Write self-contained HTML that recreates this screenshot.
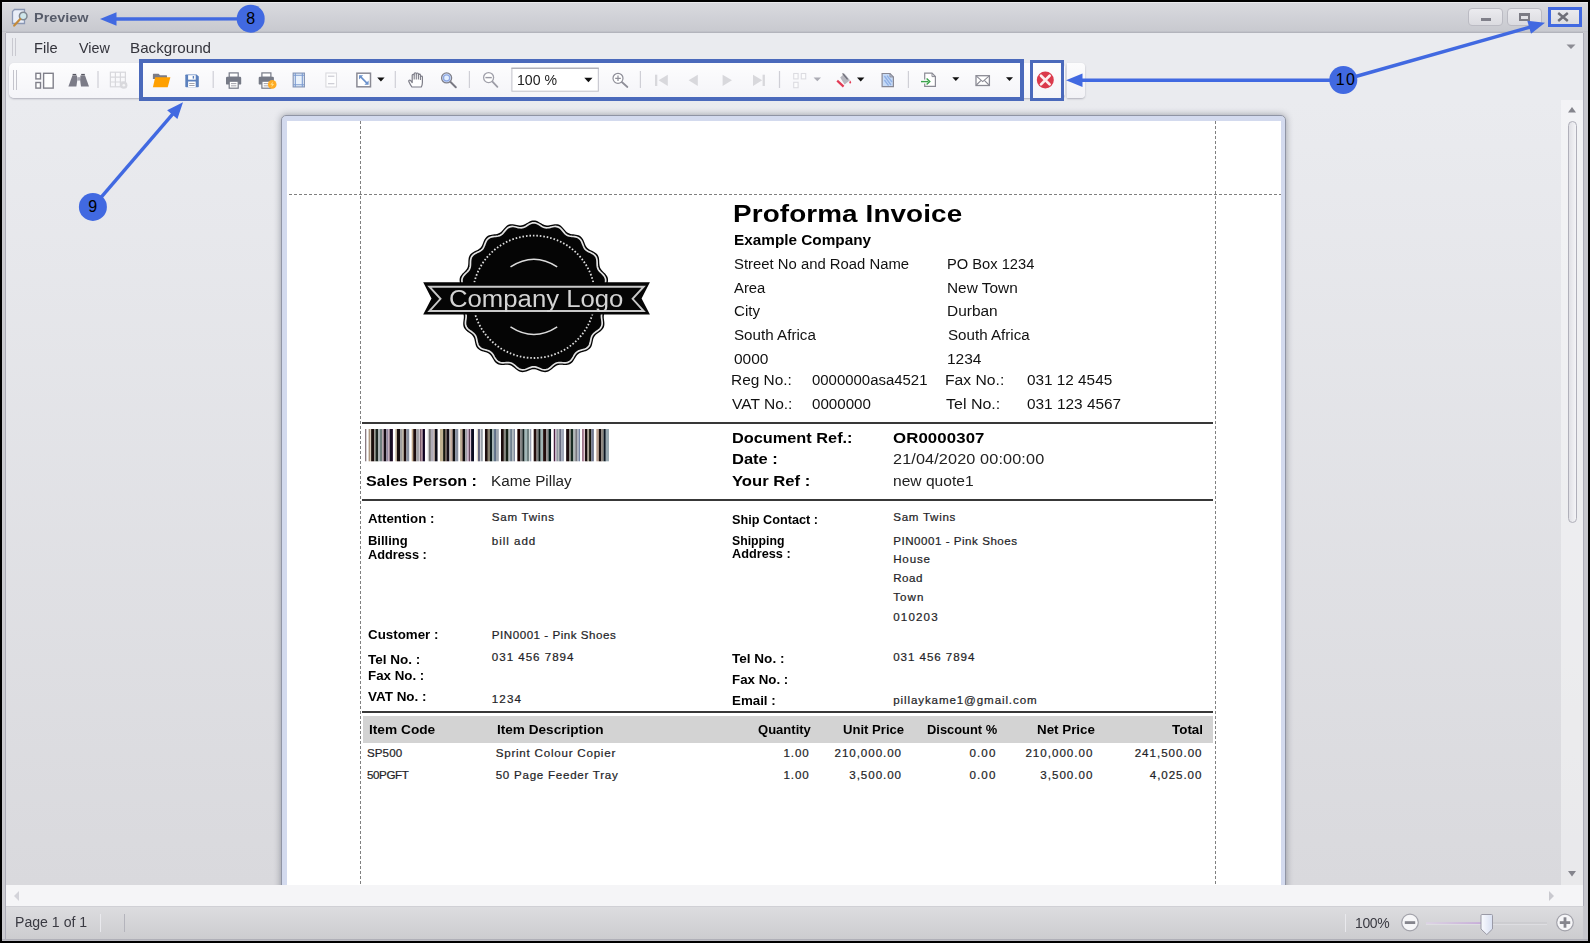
<!DOCTYPE html>
<html><head><meta charset="utf-8"><title>Preview</title>
<style>
*{box-sizing:border-box;margin:0;padding:0}
html,body{width:1590px;height:943px;overflow:hidden;background:#000;font-family:"Liberation Sans",sans-serif}
.a{position:absolute}
.t{position:absolute;white-space:pre;transform-origin:0 0;font-family:"Liberation Sans",sans-serif}
.sr{-webkit-text-stroke:.22px #1f1f28}
svg{position:absolute;overflow:visible}
.sep{position:absolute;width:1px;height:18px;top:71px;background:#c6c6ce}
.wb{position:absolute;top:8px;height:18px;border:1px solid #bbbbc3;border-radius:4px;background:linear-gradient(#ebebef,#dbdbe0)}
.hd{position:absolute;height:1px;background:repeating-linear-gradient(90deg,#808080 0 3px,transparent 3px 5px)}
.vd{position:absolute;width:1px;background:repeating-linear-gradient(180deg,#808080 0 3px,transparent 3px 5px)}
.hl{position:absolute;height:2px;background:#383838}
</style></head><body>
<div class="a" id="abs" style="left:0;top:0;width:1590px;height:943px;overflow:hidden">
<!-- window frame -->
<div class="a" style="left:2px;top:2px;width:1586px;height:939px;background:#c8c8cd"></div>
<!-- title bar -->
<div class="a" style="left:2px;top:2px;width:1586px;height:30px;background:linear-gradient(#d9dadf,#c8c9cf)"></div>
<div class="a" style="left:2px;top:2px;width:1586px;height:1px;background:#e9e9ec"></div>
<div class="a" style="left:2px;top:31px;width:1586px;height:1px;background:#c0c1c8"></div><div class="a" style="left:5px;top:32px;width:1580px;height:1.5px;background:#b3b4bc"></div>
<!-- client -->
<div class="a" style="left:6px;top:33px;width:1577px;height:873px;background:#eaebef"></div>
<!-- menu grip -->
<div class="a" style="left:12px;top:38px;width:1px;height:18px;background:#c9c9d0"></div>
<div class="a" style="left:15px;top:38px;width:1px;height:18px;background:#c9c9d0"></div>
<!-- toolbar -->
<div class="a" style="left:9px;top:63px;width:1056px;height:35px;background:linear-gradient(#fdfdfe,#f4f4f8);border-radius:5px;box-shadow:0 1px 2px #b0b0ba"></div>
<div class="a" style="left:1067px;top:63px;width:18px;height:35px;background:linear-gradient(#fcfcfd,#f2f2f6);border-radius:0 4px 4px 0;box-shadow:0 1px 2px #b0b0ba"></div>
<div class="a" style="left:13px;top:70px;width:1px;height:20px;background:#c4c4cc"></div>
<div class="a" style="left:16px;top:70px;width:1px;height:20px;background:#c4c4cc"></div>
<!-- preview area -->
<div class="a" style="left:6px;top:101px;width:1577px;height:784px;background:linear-gradient(#eaebef,#d9d9dd)"></div>
<!-- page -->
<div class="a" style="left:281px;top:115px;width:1005px;height:790px;background:#fff;border:1px solid #8f94a4;border-radius:5px 5px 0 0;box-shadow:0 0 0 5px #d3daee inset, 0 0 7px rgba(50,55,70,.45)"></div>
<div class="a" style="left:288px;top:121px;width:993px;height:790px;background:#fff"></div>
<!-- dashed margins -->
<div class="hd" style="left:289px;top:194px;width:992px"></div>
<div class="vd" style="left:360px;top:121px;height:764px"></div>
<div class="vd" style="left:1215px;top:121px;height:764px"></div>
<!-- solid rules -->
<div class="hl" style="left:362px;top:422px;width:851px"></div>
<div class="hl" style="left:362px;top:499px;width:851px"></div>
<div class="hl" style="left:362px;top:711px;width:851px"></div>
<!-- table header bg -->
<div class="a" style="left:363px;top:716px;width:850px;height:27px;background:#d3d3d3"></div>
<!-- vscroll -->
<div class="a" style="left:1561px;top:100px;width:22px;height:785px;background:rgba(255,255,255,.42)"></div>
<div class="a" style="left:1567.5px;top:121px;width:9px;height:402px;border:1px solid #b0b0ba;border-radius:4.5px;background:linear-gradient(90deg,#e0e0e5,#f4f4f7)"></div>
<svg style="left:1566px;top:105px" width="12" height="9"><path d="M2 7.4 L6 2 L10 7.4 Z" fill="#85858d"/></svg>
<svg style="left:1566px;top:869px" width="12" height="9"><path d="M2 2 L6 7.4 L10 2 Z" fill="#85858d"/></svg>
<!-- hscroll -->
<div class="a" style="left:6px;top:885px;width:1578px;height:21px;background:#f5f5f7"></div>
<svg style="left:13px;top:890px" width="8" height="12"><path d="M6 1 L1 6 L6 11 Z" fill="#d3d3d9"/></svg>
<svg style="left:1548px;top:890px" width="8" height="12"><path d="M1 1 L6 6 L1 11 Z" fill="#c9c9cf"/></svg>
<!-- status bar -->
<div class="a" style="left:5px;top:906px;width:1580px;height:33px;background:linear-gradient(#dddde0,#cccccf)"></div>
<div class="a" style="left:5px;top:906px;width:1580px;height:1px;background:#d0d0d5"></div>
<div class="a" style="left:100px;top:914px;width:1px;height:18px;background:#e9e9ed"></div>
<div class="a" style="left:124px;top:914px;width:1px;height:18px;background:#b4b4bc"></div>
<div class="a" style="left:1345px;top:914px;width:1px;height:18px;background:#e9e9ed"></div>
<!-- window edges -->
<div class="a" style="left:2px;top:32px;width:4px;height:909px;background:#cbcbd0"></div><div class="a" style="left:5px;top:33px;width:1px;height:906px;background:#adadb9"></div>
<div class="a" style="left:1583px;top:32px;width:5px;height:909px;background:#c6c6cc"></div><div class="a" style="left:1583px;top:33px;width:1px;height:873px;background:#adadb9"></div>
<div class="a" style="left:2px;top:938.5px;width:1586px;height:2.5px;background:linear-gradient(#a9a9b1,#c2c2c8)"></div>
<div class="wb" style="left:1468px;width:35px"></div>
<div class="wb" style="left:1507px;width:35px"></div>
<div class="wb" style="left:1549px;width:32px;border-color:transparent"></div>
<div class="a" style="left:1480.5px;top:18.4px;width:10.5px;height:2.4px;background:#80808a"></div>
<div class="a" style="left:1519px;top:13px;width:11px;height:8px;border:2px solid #7b7b84;border-top-width:3px"></div>
<svg style="left:1557px;top:12px" width="12" height="10"><path d="M1.2 1 L10.8 9 M10.8 1 L1.2 9" stroke="#6f6f78" stroke-width="2.4" fill="none"/></svg>
<svg style="left:1566px;top:44px" width="10" height="6"><path d="M0.5 0.5 H9.5 L5 5 Z" fill="#8c8c94"/></svg>
<svg style="left:10px;top:7px" width="20" height="22" viewBox="0 0 20 22">
<path d="M4.5 2.5 H14.5 V16.5 H2.5 V4.5 Z" fill="#e9eef8" stroke="#8a97b4" stroke-width="1.3"/>
<circle cx="13.2" cy="9" r="3.8" fill="#cfe6ea" stroke="#7f8791" stroke-width="1.5"/>
<path d="M10.3 12 L4.2 18.6" stroke="#c48a3a" stroke-width="2.2" stroke-linecap="round"/>
</svg>
<div class="a" style="left:139px;top:59px;width:885px;height:42px;border:4px solid #4a69bb"></div>
<div class="a" style="left:1030px;top:60px;width:34px;height:41px;border:3px solid #4a69bb"></div>
<div class="a" style="left:1548px;top:7px;width:34px;height:20px;border:3px solid #4169e1"></div>
<svg style="left:0;top:0" width="1590" height="943" viewBox="0 0 1590 943">
<path d="M250.7 18.9 L114.5 19.0" stroke="#4169e1" stroke-width="3.4" fill="none"/><path d="M100.0 19.0 L116.5 12.2 L116.5 25.7 Z" fill="#4169e1"/>
<path d="M92.9 206.9 L173.5 113.2" stroke="#4169e1" stroke-width="3.4" fill="none"/><path d="M183.0 102.2 L177.4 119.1 L167.1 110.3 Z" fill="#4169e1"/>
<path d="M1343.3 80.3 L1080.5 80.3" stroke="#4169e1" stroke-width="3.4" fill="none"/><path d="M1066.0 80.3 L1082.5 73.5 L1082.5 87.0 Z" fill="#4169e1"/>
<path d="M1343.3 80.0 L1531.1 26.8" stroke="#4169e1" stroke-width="3.4" fill="none"/><path d="M1545.0 22.8 L1531.0 33.8 L1527.3 20.8 Z" fill="#4169e1"/>
<circle cx="250.7" cy="18.7" r="14" fill="#4169e1"/>
<circle cx="92.9" cy="206.9" r="14" fill="#4169e1"/>
<circle cx="1343.3" cy="80" r="14" fill="#4169e1"/>
</svg>
<svg style="left:0;top:0" width="1590" height="943" viewBox="0 0 1590 943">
<defs><linearGradient id="trk" x1="0" x2="1"><stop offset="0" stop-color="#ddd2e6"/><stop offset="1" stop-color="#c3a3d8"/></linearGradient>
<linearGradient id="thm" x1="0" x2="1"><stop offset="0" stop-color="#fafbfe"/><stop offset="1" stop-color="#d9e0f2"/></linearGradient></defs>
<rect x="1426" y="922.3" width="56" height="1.6" fill="url(#trk)"/>
<rect x="1492" y="922.3" width="55" height="1.4" fill="#c6c6cc" opacity=".8"/>
<rect x="1426" y="923.9" width="121" height="1" fill="#e2e2e6" opacity=".8"/>
<circle cx="1410" cy="922.5" r="8.3" fill="#f6f6f8" stroke="#a3a3ab" stroke-width="1.2"/>
<rect x="1404.8" y="921.2" width="10.4" height="2.8" fill="#85858d"/>
<circle cx="1565" cy="922.5" r="8.3" fill="#f6f6f8" stroke="#a3a3ab" stroke-width="1.2"/>
<rect x="1559.8" y="921.2" width="10.4" height="2.8" fill="#85858d"/>
<rect x="1563.6" y="917.3" width="2.8" height="10.4" fill="#85858d"/>
<path d="M1481 915.5 Q1481 914.5 1482 914.5 H1491.5 Q1492.5 914.5 1492.5 915.5 V929 L1486.8 934.6 L1481 929 Z" fill="url(#thm)" stroke="#9a9aa6" stroke-width="1"/>
</svg>
<svg style="left:0;top:0" width="1590" height="943" viewBox="0 0 1590 943" fill="none">
<rect x="97.4" y="71" width="1.2" height="17" fill="#cfcfd6"/>
<rect x="212.6" y="71" width="1.2" height="17" fill="#cfcfd6"/>
<rect x="394.7" y="71" width="1.2" height="17" fill="#cfcfd6"/>
<rect x="468.79999999999995" y="71" width="1.2" height="17" fill="#cfcfd6"/>
<rect x="639.8" y="71" width="1.2" height="17" fill="#cfcfd6"/>
<rect x="778.9" y="71" width="1.2" height="17" fill="#cfcfd6"/>
<rect x="907.8" y="71" width="1.2" height="17" fill="#cfcfd6"/>
<g stroke="#80808a" stroke-width="1.4" fill="#fff"><rect x="35.9" y="73.3" width="4.6" height="5.6"/><rect x="35.9" y="82.5" width="4.6" height="5.6"/><rect x="43.6" y="73.3" width="9.6" height="14.8"/></g>
<g fill="#7b7b87"><path d="M72.4 75.4 L77 75.4 L77.3 80 L76.4 86.6 L68.4 86.6 Z"/><path d="M80.4 75.4 L85 75.4 L89 86.6 L81 86.6 L80.1 80 Z"/><rect x="72.6" y="73.9" width="3.6" height="1.4" fill="#55555f"/><rect x="81.2" y="73.9" width="3.6" height="1.4" fill="#55555f"/><rect x="77.3" y="77.2" width="2.8" height="3.4" fill="#a9a9b3"/></g>
<g stroke="#d8d8dc" stroke-width="1.2"><rect x="110.4" y="72.2" width="15" height="14.6"/><path d="M115.4 72.2 V86.8 M120.4 72.2 V86.8 M110.4 77.1 H125.4 M110.4 82 H125.4"/></g><circle cx="123.8" cy="85.2" r="3.6" fill="#d9d9dd"/><circle cx="123.8" cy="85.2" r="1.3" fill="#f4f4f6"/>
<path d="M152.9 74.4 Q152.9 73.8 153.5 73.8 H158.6 L160 75.2 H166.4 Q167 75.2 167 75.8 V79 H152.9 Z" fill="#7c7c86"/><path d="M155.2 77.3 H170.4 L167.7 87.2 H152.9 Z" fill="#ffa000"/>
<path d="M185.3 75.2 Q185.3 74.4 186.1 74.4 H196.6 L198.8 76.6 V86.4 Q198.8 87.2 198 87.2 H186.1 Q185.3 87.2 185.3 86.4 Z" fill="#5b80bd"/><rect x="188.1" y="75.2" width="7.6" height="4.5" fill="#fff"/><rect x="192.7" y="76" width="1.4" height="2.6" fill="#5b80bd"/><rect x="188.1" y="81.5" width="7.6" height="5.7" fill="#fff"/><rect x="189.2" y="83" width="5.4" height="0.9" fill="#9a9aa4"/><rect x="189.2" y="85" width="5.4" height="0.9" fill="#9a9aa4"/>
<rect x="229.2" y="72.9" width="9" height="4.4" fill="#fff" stroke="#767a86" stroke-width="1.2"/><rect x="226" y="76.8" width="15.2" height="7.8" rx="1.2" fill="#767a86"/><rect x="229.2" y="81.2" width="9" height="7" fill="#fff" stroke="#767a86" stroke-width="1.2"/><rect x="231" y="83.2" width="5.4" height="0.9" fill="#9a9aa4"/><rect x="231" y="85.4" width="5.4" height="0.9" fill="#9a9aa4"/>
<rect x="261.9" y="72.9" width="9" height="4.4" fill="#fff" stroke="#767a86" stroke-width="1.2"/><rect x="258.7" y="76.8" width="15.2" height="7.8" rx="1.2" fill="#767a86"/><rect x="261.9" y="81.2" width="9" height="7" fill="#fff" stroke="#767a86" stroke-width="1.2"/><rect x="263.7" y="83.2" width="5.4" height="0.9" fill="#9a9aa4"/><rect x="263.7" y="85.4" width="5.4" height="0.9" fill="#9a9aa4"/>
<circle cx="272.2" cy="84.4" r="4.3" fill="#ffab24"/><path d="M272.9 81.4 L270.3 84.8 H272 L271.4 87.4 L274.1 83.9 H272.4 Z" fill="#ffe08a"/>
<rect x="293.2" y="73.1" width="11.2" height="13.8" fill="#eaf2fb" stroke="#8796b6" stroke-width="1.2"/><path d="M295.3 73.1 V86.9 M302.3 73.1 V86.9 M293.2 75.3 H304.4 M293.2 84.7 H304.4" stroke="#7c9bd0" stroke-width="1.1"/>
<rect x="325.9" y="73" width="10.6" height="14" stroke="#dadade" stroke-width="1.1" fill="#fdfdfe"/><rect x="328" y="75.6" width="6.4" height="1.3" fill="#cfcfd6"/><rect x="328" y="83" width="6.4" height="1.3" fill="#cfcfd6"/>
<rect x="356.9" y="73.2" width="13.6" height="13.6" fill="#fff" stroke="#8a8a94" stroke-width="1.5"/><path d="M360 76.2 L367.6 83.8" stroke="#6c92cc" stroke-width="1.7"/><path d="M359 75.2 H363.2 L359 79.4 Z M368.6 84.8 H364.4 L368.6 80.6 Z" fill="#6c92cc"/>
<path d="M377.2 77.5 H384.59999999999997 L380.9 81.4 Z" fill="#111"/>
<path d="M411.9 87 C410.6 85.2 409.6 83.4 408.8 81.6 C408.3 80.3 409.8 79.5 410.7 80.6 L412.2 82.6 V75.2 C412.2 73.9 414.2 73.9 414.2 75.2 V73.7 C414.2 72.4 416.3 72.4 416.3 73.7 V73.9 C416.3 72.7 418.4 72.7 418.4 73.9 V75 C418.4 73.9 420.4 73.9 420.4 75 V76.8 C420.4 75.9 422.4 75.9 422.4 76.9 V82.6 C422.4 84.4 421.9 85.8 421.3 87 Z" fill="#fff" stroke="#7d7d88" stroke-width="1.2" stroke-linejoin="round"/><path d="M414.2 75.2 V79.6 M416.3 73.9 V79.6 M418.4 75 V79.6 M420.4 76.8 V80" stroke="#7d7d88" stroke-width="1.1"/>
<path d="M450.3 81.8 L455.8 87.2" stroke="#787882" stroke-width="2" stroke-linecap="round"/><circle cx="446.6" cy="77.9" r="5" fill="#dbe9ff" stroke="#7f7f8a" stroke-width="1.3"/><circle cx="446.6" cy="77.9" r="3.1" fill="#e3efff" stroke="#8ea8e4" stroke-width="1.3"/>
<path d="M492.2 81.4 L497.4 86.8" stroke="#9c9ca6" stroke-width="1.8" stroke-linecap="round"/><circle cx="488.6" cy="77.6" r="5" fill="#fff" stroke="#a0a0aa" stroke-width="1.3"/><rect x="485.4" y="76.9" width="6.4" height="1.4" fill="#9a9aa4"/>
<rect x="511.9" y="68.2" width="86.4" height="23" fill="#fff" stroke="#c0c0c8" stroke-width="1"/><rect x="511.4" y="67.7" width="87.4" height="1.2" fill="#adadb6"/>
<path d="M584.3 77.8 H592.5 L588.4 82.2 Z" fill="#111"/>
<path d="M621.8 82 L627.4 87" stroke="#8e8e98" stroke-width="1.7" stroke-linecap="round"/><circle cx="618" cy="78.3" r="5" fill="#fff" stroke="#8e8e98" stroke-width="1.2"/><path d="M615.2 78.3 H620.8 M618 75.5 V81.1" stroke="#8e8e98" stroke-width="1.2"/>
<g fill="#d8d8dc"><rect x="655" y="74.7" width="2.3" height="11.3"/><path d="M658.6 80.35 L667.8 74.7 V86 Z"/><path d="M688.6 80.35 L697.8 74.7 V86 Z"/><path d="M732 80.35 L722.6 74.7 V86 Z"/><path d="M762.2 80.35 L753 74.7 V86 Z"/><rect x="762.6" y="74.7" width="2.3" height="11.3"/></g>
<g stroke="#dcdce1" stroke-width="1.1" fill="#fcfcfd"><rect x="793.7" y="73.5" width="4.4" height="5.4"/><rect x="801.3" y="73.5" width="4.4" height="5.4"/><rect x="793.7" y="82.3" width="4.4" height="5.4"/></g>
<path d="M813.5999999999999 77.4 H821.0 L817.3 81.2 Z" fill="#acacb4"/>
<path d="M840.2 77.6 L844.4 73.6 L850 80.2 L844.6 84.6 Z" fill="#b7b7bf"/><path d="M842.6 73.4 L847.6 79.4" stroke="#6e6e78" stroke-width="1.4"/><path d="M837.2 80.6 L843.6 86.6" stroke="#e23a55" stroke-width="2.2"/><path d="M850.2 80.6 C851.6 82.2 851.4 83.6 850.2 83.6 C849 83.6 848.9 82.2 850.2 80.6 Z" fill="#e23a55"/>
<path d="M857.0 77.5 H864.4000000000001 L860.7 81.4 Z" fill="#111"/>
<path d="M882.1 73.5 H890 L893.4 76.9 V86.6 H882.1 Z" fill="#c6daf6" stroke="#888894" stroke-width="1.2"/><path d="M890 73.5 V76.9 H893.4" stroke="#888894" stroke-width="1"/><path d="M884.4 76 L891 85 M884.4 80 L888.6 85.6 M887 75.6 L892 82" stroke="#8fb0e6" stroke-width="1.4"/>
<path d="M924.7 73.2 H932 L935.4 76.6 V86.4 H924.7 Z" fill="#fff" stroke="#8a8a94" stroke-width="1.2"/><path d="M932 73.2 V76.6 H935.4" stroke="#8a8a94" stroke-width="1"/><rect x="923.2" y="79.6" width="3" height="4" fill="#fff"/><path d="M921 81.6 H928.4" stroke="#3aa24a" stroke-width="1.4"/><path d="M926.6 78.6 L929.8 81.6 L926.6 84.6" stroke="#3aa24a" stroke-width="1.4"/>
<path d="M952.3 77.2 H959.3 L955.8 81.10000000000001 Z" fill="#111"/>
<rect x="976" y="75.7" width="13.4" height="9.8" fill="#fff" stroke="#8a8a94" stroke-width="1.3"/><path d="M976.4 76.2 L982.7 81.6 L989 76.2 M976.4 85 L980.8 80.6 M989 85 L984.6 80.6" stroke="#8a8a94" stroke-width="1.1"/>
<path d="M1006.0 77.2 H1013.0 L1009.5 81.10000000000001 Z" fill="#111"/>
<circle cx="1045.3" cy="80.1" r="8.5" fill="#db3a4c"/><path d="M1041 75.8 L1049.6 84.4 M1049.6 75.8 L1041 84.4" stroke="#fdeff0" stroke-width="2.7" stroke-linecap="round"/>
</svg>
<svg style="left:0;top:0" width="1590" height="943" viewBox="0 0 1590 943">
<path d="M533.80,220.45 L535.06,220.56 L536.31,220.86 L537.55,221.35 L538.76,221.96 L539.94,222.65 L541.11,223.37 L542.26,224.04 L543.40,224.61 L544.56,225.06 L545.72,225.34 L546.92,225.45 L548.15,225.41 L549.43,225.23 L550.73,224.97 L552.06,224.68 L553.41,224.41 L554.76,224.22 L556.08,224.16 L557.36,224.28 L558.59,224.59 L559.75,225.10 L560.83,225.79 L561.84,226.65 L562.79,227.63 L563.69,228.67 L564.56,229.72 L565.43,230.73 L566.32,231.64 L567.27,232.44 L568.28,233.08 L569.38,233.58 L570.56,233.94 L571.82,234.18 L573.14,234.36 L574.49,234.51 L575.86,234.70 L577.19,234.96 L578.46,235.33 L579.64,235.86 L580.70,236.55 L581.63,237.41 L582.42,238.42 L583.10,239.56 L583.68,240.79 L584.19,242.06 L584.67,243.34 L585.17,244.58 L585.72,245.73 L586.35,246.79 L587.10,247.73 L587.98,248.56 L588.98,249.28 L590.09,249.92 L591.28,250.52 L592.51,251.10 L593.74,251.72 L594.92,252.40 L596.00,253.16 L596.94,254.04 L597.72,255.04 L598.32,256.15 L598.75,257.37 L599.02,258.67 L599.16,260.02 L599.23,261.39 L599.27,262.75 L599.34,264.08 L599.49,265.36 L599.74,266.56 L600.15,267.70 L600.71,268.76 L601.42,269.77 L602.26,270.74 L603.19,271.69 L604.17,272.64 L605.13,273.62 L606.02,274.65 L606.80,275.72 L607.40,276.86 L607.81,278.06 L608.02,279.31 L608.03,280.59 L607.86,281.91 L607.57,283.23 L607.19,284.55 L606.78,285.86 L606.41,287.14 L606.14,288.39 L605.99,289.61 L606.00,290.82 L606.19,292.01 L606.53,293.19 L607.01,294.38 L607.59,295.58 L608.20,296.80 L608.79,298.04 L609.30,299.30 L609.68,300.57 L609.89,301.84 L609.89,303.10 L609.68,304.35 L609.27,305.57 L608.69,306.76 L607.97,307.92 L607.19,309.05 L606.38,310.15 L605.62,311.24 L604.95,312.33 L604.41,313.44 L604.03,314.59 L603.82,315.77 L603.76,317.00 L603.83,318.28 L603.99,319.60 L604.17,320.96 L604.33,322.32 L604.40,323.68 L604.35,325.00 L604.13,326.27 L603.72,327.47 L603.12,328.58 L602.33,329.60 L601.39,330.54 L600.34,331.40 L599.23,332.21 L598.11,332.99 L597.04,333.78 L596.05,334.59 L595.18,335.47 L594.45,336.43 L593.87,337.48 L593.41,338.62 L593.06,339.86 L592.78,341.16 L592.51,342.50 L592.22,343.84 L591.85,345.15 L591.37,346.38 L590.75,347.51 L589.97,348.51 L589.04,349.37 L587.97,350.08 L586.78,350.66 L585.50,351.13 L584.19,351.54 L582.88,351.91 L581.60,352.31 L580.40,352.76 L579.30,353.30 L578.30,353.97 L577.41,354.78 L576.60,355.71 L575.87,356.77 L575.18,357.90 L574.49,359.09 L573.78,360.26 L573.01,361.38 L572.15,362.39 L571.20,363.25 L570.14,363.95 L568.98,364.45 L567.73,364.78 L566.42,364.94 L565.06,364.98 L563.69,364.93 L562.32,364.86 L560.99,364.82 L559.71,364.86 L558.49,365.02 L557.32,365.32 L556.22,365.79 L555.16,366.42 L554.12,367.18 L553.10,368.03 L552.06,368.92 L551.01,369.80 L549.91,370.61 L548.78,371.29 L547.59,371.80 L546.37,372.11 L545.11,372.21 L543.82,372.11 L542.52,371.84 L541.23,371.43 L539.94,370.95 L538.68,370.44 L537.43,369.96 L536.21,369.58 L535.00,369.34 L533.80,369.25 L532.60,369.34 L531.39,369.58 L530.17,369.96 L528.92,370.44 L527.66,370.95 L526.37,371.43 L525.08,371.84 L523.78,372.11 L522.49,372.21 L521.23,372.11 L520.01,371.80 L518.82,371.29 L517.69,370.61 L516.59,369.80 L515.54,368.92 L514.50,368.03 L513.48,367.18 L512.44,366.42 L511.38,365.79 L510.28,365.32 L509.11,365.02 L507.89,364.86 L506.61,364.82 L505.28,364.86 L503.91,364.93 L502.54,364.98 L501.18,364.94 L499.87,364.78 L498.62,364.45 L497.46,363.95 L496.40,363.25 L495.45,362.39 L494.59,361.38 L493.82,360.26 L493.11,359.09 L492.42,357.90 L491.73,356.77 L491.00,355.71 L490.19,354.78 L489.30,353.97 L488.30,353.30 L487.20,352.76 L486.00,352.31 L484.72,351.91 L483.41,351.54 L482.10,351.13 L480.82,350.66 L479.63,350.08 L478.56,349.37 L477.63,348.51 L476.85,347.51 L476.23,346.38 L475.75,345.15 L475.38,343.84 L475.09,342.50 L474.82,341.16 L474.54,339.86 L474.19,338.62 L473.73,337.48 L473.15,336.43 L472.42,335.47 L471.55,334.59 L470.56,333.78 L469.49,332.99 L468.37,332.21 L467.26,331.40 L466.21,330.54 L465.27,329.60 L464.48,328.58 L463.88,327.47 L463.47,326.27 L463.25,325.00 L463.20,323.68 L463.27,322.32 L463.43,320.96 L463.61,319.60 L463.77,318.28 L463.84,317.00 L463.78,315.77 L463.57,314.59 L463.19,313.44 L462.65,312.33 L461.98,311.24 L461.22,310.15 L460.41,309.05 L459.63,307.92 L458.91,306.76 L458.33,305.57 L457.92,304.35 L457.71,303.10 L457.71,301.84 L457.92,300.57 L458.30,299.30 L458.81,298.04 L459.40,296.80 L460.01,295.58 L460.59,294.38 L461.07,293.19 L461.41,292.01 L461.60,290.82 L461.61,289.61 L461.46,288.39 L461.19,287.14 L460.82,285.86 L460.41,284.55 L460.03,283.23 L459.74,281.91 L459.57,280.59 L459.58,279.31 L459.79,278.06 L460.20,276.86 L460.80,275.72 L461.58,274.65 L462.47,273.62 L463.43,272.64 L464.41,271.69 L465.34,270.74 L466.18,269.77 L466.89,268.76 L467.45,267.70 L467.86,266.56 L468.11,265.36 L468.26,264.08 L468.33,262.75 L468.37,261.39 L468.44,260.02 L468.58,258.67 L468.85,257.37 L469.28,256.15 L469.88,255.04 L470.66,254.04 L471.60,253.16 L472.68,252.40 L473.86,251.72 L475.09,251.10 L476.32,250.52 L477.51,249.92 L478.62,249.28 L479.62,248.56 L480.50,247.73 L481.25,246.79 L481.88,245.73 L482.43,244.58 L482.93,243.34 L483.41,242.06 L483.92,240.79 L484.50,239.56 L485.18,238.42 L485.97,237.41 L486.90,236.55 L487.96,235.86 L489.14,235.33 L490.41,234.96 L491.74,234.70 L493.11,234.51 L494.46,234.36 L495.78,234.18 L497.04,233.94 L498.22,233.58 L499.32,233.08 L500.33,232.44 L501.28,231.64 L502.17,230.73 L503.04,229.72 L503.91,228.67 L504.81,227.63 L505.76,226.65 L506.77,225.79 L507.85,225.10 L509.01,224.59 L510.24,224.28 L511.52,224.16 L512.84,224.22 L514.19,224.41 L515.54,224.68 L516.87,224.97 L518.17,225.23 L519.45,225.41 L520.68,225.45 L521.88,225.34 L523.04,225.06 L524.20,224.61 L525.34,224.04 L526.49,223.37 L527.66,222.65 L528.84,221.96 L530.05,221.35 L531.29,220.86 L532.54,220.56Z" fill="#050505"/>
<path d="M533.80,222.85 L535.02,222.96 L536.23,223.26 L537.43,223.74 L538.60,224.36 L539.75,225.05 L540.87,225.75 L541.98,226.42 L543.09,226.99 L544.20,227.43 L545.33,227.71 L546.49,227.81 L547.68,227.76 L548.91,227.58 L550.18,227.31 L551.47,227.00 L552.78,226.72 L554.09,226.52 L555.38,226.46 L556.62,226.56 L557.81,226.86 L558.93,227.35 L559.98,228.04 L560.95,228.88 L561.86,229.84 L562.72,230.86 L563.56,231.90 L564.39,232.89 L565.25,233.79 L566.16,234.57 L567.14,235.19 L568.20,235.67 L569.35,236.01 L570.57,236.23 L571.86,236.39 L573.18,236.52 L574.51,236.68 L575.81,236.92 L577.05,237.27 L578.19,237.78 L579.22,238.44 L580.12,239.28 L580.89,240.26 L581.53,241.38 L582.08,242.58 L582.56,243.83 L583.02,245.08 L583.49,246.29 L584.01,247.42 L584.62,248.45 L585.34,249.36 L586.19,250.15 L587.16,250.84 L588.24,251.46 L589.41,252.02 L590.62,252.58 L591.82,253.16 L592.98,253.81 L594.03,254.54 L594.95,255.39 L595.71,256.35 L596.29,257.43 L596.69,258.62 L596.94,259.88 L597.07,261.19 L597.12,262.53 L597.15,263.86 L597.19,265.16 L597.32,266.39 L597.56,267.56 L597.95,268.66 L598.49,269.69 L599.19,270.66 L600.02,271.59 L600.94,272.50 L601.90,273.42 L602.85,274.36 L603.73,275.35 L604.49,276.39 L605.09,277.49 L605.49,278.65 L605.68,279.86 L605.68,281.11 L605.51,282.38 L605.21,283.67 L604.82,284.95 L604.41,286.21 L604.03,287.45 L603.75,288.67 L603.60,289.85 L603.61,291.02 L603.79,292.16 L604.14,293.31 L604.62,294.46 L605.19,295.62 L605.80,296.80 L606.39,298.00 L606.91,299.22 L607.29,300.45 L607.49,301.68 L607.50,302.91 L607.29,304.11 L606.89,305.30 L606.31,306.45 L605.60,307.56 L604.82,308.65 L604.02,309.71 L603.26,310.77 L602.60,311.82 L602.07,312.89 L601.71,314.00 L601.51,315.14 L601.46,316.34 L601.54,317.58 L601.70,318.86 L601.90,320.18 L602.07,321.51 L602.16,322.82 L602.12,324.11 L601.92,325.34 L601.52,326.51 L600.93,327.58 L600.17,328.57 L599.25,329.47 L598.21,330.29 L597.12,331.07 L596.02,331.81 L594.97,332.56 L594.00,333.35 L593.15,334.19 L592.44,335.11 L591.88,336.13 L591.45,337.25 L591.12,338.45 L590.86,339.72 L590.62,341.02 L590.35,342.33 L590.01,343.61 L589.55,344.82 L588.96,345.92 L588.21,346.88 L587.30,347.71 L586.26,348.40 L585.09,348.95 L583.85,349.40 L582.56,349.77 L581.28,350.12 L580.04,350.49 L578.87,350.91 L577.79,351.43 L576.83,352.08 L575.96,352.86 L575.19,353.77 L574.49,354.80 L573.83,355.92 L573.18,357.08 L572.50,358.23 L571.76,359.32 L570.94,360.32 L570.02,361.16 L569.00,361.84 L567.87,362.33 L566.66,362.63 L565.38,362.78 L564.06,362.80 L562.72,362.74 L561.40,362.65 L560.10,362.59 L558.86,362.61 L557.67,362.76 L556.55,363.05 L555.48,363.51 L554.45,364.13 L553.46,364.87 L552.47,365.71 L551.47,366.60 L550.46,367.47 L549.40,368.26 L548.30,368.93 L547.16,369.44 L545.97,369.74 L544.75,369.84 L543.50,369.73 L542.25,369.46 L540.99,369.05 L539.75,368.55 L538.52,368.04 L537.31,367.57 L536.13,367.18 L534.96,366.94 L533.80,366.85 L532.64,366.94 L531.47,367.18 L530.29,367.57 L529.08,368.04 L527.85,368.55 L526.61,369.05 L525.35,369.46 L524.10,369.73 L522.85,369.84 L521.63,369.74 L520.44,369.44 L519.30,368.93 L518.20,368.26 L517.14,367.47 L516.13,366.60 L515.13,365.71 L514.14,364.87 L513.15,364.13 L512.12,363.51 L511.05,363.05 L509.93,362.76 L508.74,362.61 L507.50,362.59 L506.20,362.65 L504.88,362.74 L503.54,362.80 L502.22,362.78 L500.94,362.63 L499.73,362.33 L498.60,361.84 L497.58,361.16 L496.66,360.32 L495.84,359.32 L495.10,358.23 L494.42,357.08 L493.77,355.92 L493.11,354.80 L492.41,353.77 L491.64,352.86 L490.77,352.08 L489.81,351.43 L488.73,350.91 L487.56,350.49 L486.32,350.12 L485.04,349.77 L483.75,349.40 L482.51,348.95 L481.34,348.40 L480.30,347.71 L479.39,346.88 L478.64,345.92 L478.05,344.82 L477.59,343.61 L477.25,342.33 L476.98,341.02 L476.74,339.72 L476.48,338.45 L476.15,337.25 L475.72,336.13 L475.16,335.11 L474.45,334.19 L473.60,333.35 L472.63,332.56 L471.58,331.81 L470.48,331.07 L469.39,330.29 L468.35,329.47 L467.43,328.57 L466.67,327.58 L466.08,326.51 L465.68,325.34 L465.48,324.11 L465.44,322.82 L465.53,321.51 L465.70,320.18 L465.90,318.86 L466.06,317.58 L466.14,316.34 L466.09,315.14 L465.89,314.00 L465.53,312.89 L465.00,311.82 L464.34,310.77 L463.58,309.71 L462.78,308.65 L462.00,307.56 L461.29,306.45 L460.71,305.30 L460.31,304.11 L460.10,302.91 L460.11,301.68 L460.31,300.45 L460.69,299.22 L461.21,298.00 L461.80,296.80 L462.41,295.62 L462.98,294.46 L463.46,293.31 L463.81,292.16 L463.99,291.02 L464.00,289.85 L463.85,288.67 L463.57,287.45 L463.19,286.21 L462.78,284.95 L462.39,283.67 L462.09,282.38 L461.92,281.11 L461.92,279.86 L462.11,278.65 L462.51,277.49 L463.11,276.39 L463.87,275.35 L464.75,274.36 L465.70,273.42 L466.66,272.50 L467.58,271.59 L468.41,270.66 L469.11,269.69 L469.65,268.66 L470.04,267.56 L470.28,266.39 L470.41,265.16 L470.45,263.86 L470.48,262.53 L470.53,261.19 L470.66,259.88 L470.91,258.62 L471.31,257.43 L471.89,256.35 L472.65,255.39 L473.57,254.54 L474.62,253.81 L475.78,253.16 L476.98,252.58 L478.19,252.02 L479.36,251.46 L480.44,250.84 L481.41,250.15 L482.26,249.36 L482.98,248.45 L483.59,247.42 L484.11,246.29 L484.58,245.08 L485.04,243.83 L485.52,242.58 L486.07,241.38 L486.71,240.26 L487.48,239.28 L488.38,238.44 L489.41,237.78 L490.55,237.27 L491.79,236.92 L493.09,236.68 L494.42,236.52 L495.74,236.39 L497.03,236.23 L498.25,236.01 L499.40,235.67 L500.46,235.19 L501.44,234.57 L502.35,233.79 L503.21,232.89 L504.04,231.90 L504.88,230.86 L505.74,229.84 L506.65,228.88 L507.62,228.04 L508.67,227.35 L509.79,226.86 L510.98,226.56 L512.22,226.46 L513.51,226.52 L514.82,226.72 L516.13,227.00 L517.42,227.31 L518.69,227.58 L519.92,227.76 L521.11,227.81 L522.27,227.71 L523.40,227.43 L524.51,226.99 L525.62,226.42 L526.73,225.75 L527.85,225.05 L529.00,224.36 L530.17,223.74 L531.37,223.26 L532.58,222.96Z" fill="none" stroke="#e4e4e4" stroke-width="1.7"/>
<circle cx="533.8" cy="296.8" r="61.2" fill="none" stroke="#dcdcdc" stroke-width="1.8" stroke-dasharray="1.6 1.9"/>
<path d="M510.5 266.8 Q534 251.5 557.2 266.8" fill="none" stroke="#dcdcdc" stroke-width="1.5"/>
<path d="M510.5 326.8 Q534 342 557.2 326.8" fill="none" stroke="#dcdcdc" stroke-width="1.5"/>
<path d="M423.2 282.3 H649.9 L641.6 298.5 L649.9 314.6 H423.2 L431.5 298.5 Z" fill="#050505"/>
<path d="M429.4 286.7 H643.7 L632.6 298.8 L643.7 311 H429.4 L440.5 298.8 Z" fill="none" stroke="#c9c9c9" stroke-width="1.9"/>
</svg>
<svg style="left:0;top:0" width="1590" height="943" viewBox="0 0 1590 943"><defs><filter id="bb" x="-2%" y="-5%" width="104%" height="110%"><feGaussianBlur stdDeviation="0.45 0.3"/></filter></defs><g filter="url(#bb)">
<rect x="365.02" y="429" width="1.31" height="32.3" fill="#8a7a80"/>
<rect x="368.60" y="429" width="1.62" height="32.3" fill="#b09880"/>
<rect x="370.18" y="429" width="0.99" height="32.3" fill="#d8c8b8"/>
<rect x="371.12" y="429" width="3.19" height="32.3" fill="#1a100c"/>
<rect x="374.26" y="429" width="1.31" height="32.3" fill="#909088"/>
<rect x="375.52" y="429" width="2.88" height="32.3" fill="#1c2820"/>
<rect x="378.35" y="429" width="1.62" height="32.3" fill="#b0b8bc"/>
<rect x="379.92" y="429" width="2.25" height="32.3" fill="#708080"/>
<rect x="382.13" y="429" width="1.62" height="32.3" fill="#b0a0a8"/>
<rect x="383.70" y="429" width="2.57" height="32.3" fill="#140818"/>
<rect x="386.21" y="429" width="2.25" height="32.3" fill="#9088a0"/>
<rect x="388.42" y="429" width="1.31" height="32.3" fill="#c0a0b0"/>
<rect x="389.67" y="429" width="3.19" height="32.3" fill="#180820"/>
<rect x="395.33" y="429" width="1.62" height="32.3" fill="#c8b8a0"/>
<rect x="396.91" y="429" width="3.19" height="32.3" fill="#180c0c"/>
<rect x="400.05" y="429" width="2.25" height="32.3" fill="#a0a0a0"/>
<rect x="402.25" y="429" width="1.62" height="32.3" fill="#b0a898"/>
<rect x="403.82" y="429" width="2.57" height="32.3" fill="#1c0c08"/>
<rect x="406.34" y="429" width="2.88" height="32.3" fill="#8890a0"/>
<rect x="411.69" y="429" width="1.62" height="32.3" fill="#c0a888"/>
<rect x="413.26" y="429" width="2.88" height="32.3" fill="#1c0808"/>
<rect x="416.09" y="429" width="2.88" height="32.3" fill="#a0a0a4"/>
<rect x="418.92" y="429" width="1.31" height="32.3" fill="#d0c8cc"/>
<rect x="420.18" y="429" width="1.31" height="32.3" fill="#604050"/>
<rect x="421.43" y="429" width="1.31" height="32.3" fill="#b08898"/>
<rect x="422.69" y="429" width="2.25" height="32.3" fill="#080420"/>
<rect x="427.72" y="429" width="1.31" height="32.3" fill="#c8c8c8"/>
<rect x="428.98" y="429" width="1.94" height="32.3" fill="#787878"/>
<rect x="430.87" y="429" width="2.88" height="32.3" fill="#b0acb8"/>
<rect x="433.70" y="429" width="1.31" height="32.3" fill="#b0a098"/>
<rect x="434.96" y="429" width="2.57" height="32.3" fill="#080818"/>
<rect x="439.99" y="429" width="3.19" height="32.3" fill="#c0b090"/>
<rect x="443.13" y="429" width="1.94" height="32.3" fill="#141408"/>
<rect x="445.02" y="429" width="1.62" height="32.3" fill="#706058"/>
<rect x="446.59" y="429" width="2.57" height="32.3" fill="#181018"/>
<rect x="449.11" y="429" width="1.31" height="32.3" fill="#a0a0a8"/>
<rect x="450.36" y="429" width="2.25" height="32.3" fill="#c0a898"/>
<rect x="452.57" y="429" width="2.57" height="32.3" fill="#100810"/>
<rect x="455.08" y="429" width="3.19" height="32.3" fill="#8890a0"/>
<rect x="460.11" y="429" width="1.94" height="32.3" fill="#b8a890"/>
<rect x="462.00" y="429" width="0.99" height="32.3" fill="#806860"/>
<rect x="462.94" y="429" width="2.25" height="32.3" fill="#0c0810"/>
<rect x="465.14" y="429" width="2.25" height="32.3" fill="#a0a0a8"/>
<rect x="467.35" y="429" width="1.62" height="32.3" fill="#c0a8c0"/>
<rect x="468.92" y="429" width="0.99" height="32.3" fill="#402038"/>
<rect x="469.86" y="429" width="1.31" height="32.3" fill="#e0c8d8"/>
<rect x="471.12" y="429" width="2.88" height="32.3" fill="#0c0c20"/>
<rect x="476.78" y="429" width="1.31" height="32.3" fill="#e0d8c8"/>
<rect x="478.04" y="429" width="1.94" height="32.3" fill="#606078"/>
<rect x="479.92" y="429" width="0.99" height="32.3" fill="#d0d0d8"/>
<rect x="480.87" y="429" width="1.94" height="32.3" fill="#98a0a8"/>
<rect x="484.96" y="429" width="2.88" height="32.3" fill="#1c1008"/>
<rect x="487.79" y="429" width="2.25" height="32.3" fill="#888070"/>
<rect x="489.99" y="429" width="2.25" height="32.3" fill="#0c1c1c"/>
<rect x="492.19" y="429" width="1.94" height="32.3" fill="#a0b0b0"/>
<rect x="494.08" y="429" width="1.94" height="32.3" fill="#607088"/>
<rect x="495.96" y="429" width="2.88" height="32.3" fill="#a0a8b0"/>
<rect x="500.99" y="429" width="2.88" height="32.3" fill="#1c0c08"/>
<rect x="503.82" y="429" width="1.94" height="32.3" fill="#888880"/>
<rect x="505.71" y="429" width="2.88" height="32.3" fill="#182018"/>
<rect x="508.54" y="429" width="1.62" height="32.3" fill="#b0b8b8"/>
<rect x="510.11" y="429" width="2.25" height="32.3" fill="#708090"/>
<rect x="512.31" y="429" width="1.62" height="32.3" fill="#a8b0b8"/>
<rect x="513.89" y="429" width="0.99" height="32.3" fill="#707890"/>
<rect x="517.35" y="429" width="2.88" height="32.3" fill="#1c0404"/>
<rect x="520.18" y="429" width="2.25" height="32.3" fill="#808080"/>
<rect x="522.38" y="429" width="2.25" height="32.3" fill="#182420"/>
<rect x="524.58" y="429" width="2.25" height="32.3" fill="#a0b8b8"/>
<rect x="526.78" y="429" width="2.25" height="32.3" fill="#708080"/>
<rect x="528.98" y="429" width="1.31" height="32.3" fill="#d0d8d8"/>
<rect x="530.24" y="429" width="0.99" height="32.3" fill="#8088a0"/>
<rect x="533.70" y="429" width="2.88" height="32.3" fill="#200808"/>
<rect x="536.53" y="429" width="1.94" height="32.3" fill="#808080"/>
<rect x="538.42" y="429" width="2.25" height="32.3" fill="#081818"/>
<rect x="540.62" y="429" width="2.57" height="32.3" fill="#a0b4b4"/>
<rect x="543.13" y="429" width="3.19" height="32.3" fill="#200808"/>
<rect x="546.28" y="429" width="2.25" height="32.3" fill="#909090"/>
<rect x="548.48" y="429" width="2.57" height="32.3" fill="#041418"/>
<rect x="553.76" y="429" width="1.31" height="32.3" fill="#482040"/>
<rect x="555.02" y="429" width="1.43" height="32.3" fill="#c8b0c8"/>
<rect x="556.40" y="429" width="1.94" height="32.3" fill="#9098a0"/>
<rect x="558.29" y="429" width="0.99" height="32.3" fill="#a8b0b0"/>
<rect x="559.23" y="429" width="1.94" height="32.3" fill="#686c80"/>
<rect x="561.12" y="429" width="2.88" height="32.3" fill="#a0a8b8"/>
<rect x="566.15" y="429" width="2.88" height="32.3" fill="#1c0c0c"/>
<rect x="568.98" y="429" width="1.94" height="32.3" fill="#909088"/>
<rect x="570.87" y="429" width="2.57" height="32.3" fill="#182c24"/>
<rect x="573.38" y="429" width="1.94" height="32.3" fill="#b0b8b8"/>
<rect x="575.27" y="429" width="2.25" height="32.3" fill="#787880"/>
<rect x="577.47" y="429" width="1.62" height="32.3" fill="#a8b0c0"/>
<rect x="579.04" y="429" width="0.99" height="32.3" fill="#7080a0"/>
<rect x="582.19" y="429" width="1.62" height="32.3" fill="#885870"/>
<rect x="583.76" y="429" width="1.31" height="32.3" fill="#e0c8d0"/>
<rect x="585.02" y="429" width="2.57" height="32.3" fill="#181010"/>
<rect x="587.53" y="429" width="1.62" height="32.3" fill="#b0a898"/>
<rect x="589.11" y="429" width="2.25" height="32.3" fill="#141810"/>
<rect x="591.31" y="429" width="2.57" height="32.3" fill="#707890"/>
<rect x="596.34" y="429" width="2.57" height="32.3" fill="#b8a090"/>
<rect x="598.86" y="429" width="2.57" height="32.3" fill="#180808"/>
<rect x="601.37" y="429" width="2.25" height="32.3" fill="#908880"/>
<rect x="603.57" y="429" width="2.25" height="32.3" fill="#081820"/>
<rect x="605.77" y="429" width="3.19" height="32.3" fill="#98a8b0"/>
</g></svg>
<span id="t0" class="t " style="left:34.30px;top:10.93px;font-size:13.2px;line-height:13.2px;font-weight:700;color:#565b69;letter-spacing:0.000px;transform:scaleX(1.0950);">Preview</span>
<span id="t1" class="t " style="left:34.02px;top:40.00px;font-size:15px;line-height:15px;font-weight:400;color:#33333b;letter-spacing:0.000px;transform:scaleX(0.9769);">File</span>
<span id="t2" class="t " style="left:79.00px;top:40.00px;font-size:15px;line-height:15px;font-weight:400;color:#33333b;letter-spacing:0.000px;transform:scaleX(0.9565);">View</span>
<span id="t3" class="t " style="left:129.99px;top:40.00px;font-size:15px;line-height:15px;font-weight:400;color:#33333b;letter-spacing:0.000px;transform:scaleX(1.0126);">Background</span>
<span id="t4" class="t " style="left:517.39px;top:73.15px;font-size:14px;line-height:14px;font-weight:400;color:#222;letter-spacing:0.000px;transform:scaleX(1.0092);">100 %</span>
<span id="t5" class="t " style="left:14.59px;top:914.38px;font-size:15.5px;line-height:15.5px;font-weight:400;color:#3a3a42;letter-spacing:0.000px;transform:scaleX(0.9103);">Page 1 of 1</span>
<span id="t6" class="t " style="left:1355.30px;top:914.68px;font-size:15.5px;line-height:15.5px;font-weight:400;color:#3a3a42;letter-spacing:-0.361px;transform:scaleX(0.9000);">100%</span>
<span id="t7" class="t " style="left:246.20px;top:10.96px;font-size:16px;line-height:16px;font-weight:400;color:#000;letter-spacing:0.000px;">8</span>
<span id="t8" class="t " style="left:88.30px;top:198.96px;font-size:16px;line-height:16px;font-weight:400;color:#000;letter-spacing:0.000px;">9</span>
<span id="t9" class="t " style="left:1335.70px;top:72.46px;font-size:16px;line-height:16px;font-weight:400;color:#000;letter-spacing:1.402px;">10</span>
<span id="t10" class="t " style="left:733.24px;top:201.78px;font-size:24px;line-height:24px;font-weight:700;color:#000;letter-spacing:0.100px;transform:scaleX(1.1600);">Proforma Invoice</span>
<span id="t11" class="t " style="left:734.00px;top:232.73px;font-size:14.5px;line-height:14.5px;font-weight:700;color:#000;letter-spacing:0.000px;transform:scaleX(1.0565);">Example Company</span>
<span id="t12" class="t " style="left:734.00px;top:256.75px;font-size:14px;line-height:14px;font-weight:400;color:#111;letter-spacing:0.000px;transform:scaleX(1.0612);">Street No and Road Name</span>
<span id="t13" class="t " style="left:734.00px;top:280.65px;font-size:14px;line-height:14px;font-weight:400;color:#111;letter-spacing:0.000px;transform:scaleX(1.0609);">Area</span>
<span id="t14" class="t " style="left:734.00px;top:304.15px;font-size:14px;line-height:14px;font-weight:400;color:#111;letter-spacing:-0.000px;transform:scaleX(1.0784);">City</span>
<span id="t15" class="t " style="left:734.00px;top:328.15px;font-size:14px;line-height:14px;font-weight:400;color:#111;letter-spacing:0.000px;transform:scaleX(1.0840);">South Africa</span>
<span id="t16" class="t " style="left:734.00px;top:351.65px;font-size:14px;line-height:14px;font-weight:400;color:#111;letter-spacing:0.000px;transform:scaleX(1.1066);">0000</span>
<span id="t17" class="t " style="left:946.95px;top:256.75px;font-size:14px;line-height:14px;font-weight:400;color:#111;letter-spacing:0.000px;transform:scaleX(1.0486);">PO Box 1234</span>
<span id="t18" class="t " style="left:946.90px;top:280.65px;font-size:14px;line-height:14px;font-weight:400;color:#111;letter-spacing:0.000px;transform:scaleX(1.0988);">New Town</span>
<span id="t19" class="t " style="left:946.90px;top:304.15px;font-size:14px;line-height:14px;font-weight:400;color:#111;letter-spacing:0.000px;transform:scaleX(1.1035);">Durban</span>
<span id="t20" class="t " style="left:948.00px;top:328.15px;font-size:14px;line-height:14px;font-weight:400;color:#111;letter-spacing:0.000px;transform:scaleX(1.0814);">South Africa</span>
<span id="t21" class="t " style="left:946.89px;top:351.65px;font-size:14px;line-height:14px;font-weight:400;color:#111;letter-spacing:0.000px;transform:scaleX(1.1068);">1234</span>
<span id="t22" class="t " style="left:730.90px;top:373.15px;font-size:14px;line-height:14px;font-weight:400;color:#111;letter-spacing:0.000px;transform:scaleX(1.1020);">Reg No.:</span>
<span id="t23" class="t " style="left:811.80px;top:373.15px;font-size:14px;line-height:14px;font-weight:400;color:#111;letter-spacing:0.000px;transform:scaleX(1.0670);">0000000asa4521</span>
<span id="t24" class="t " style="left:944.68px;top:373.15px;font-size:14px;line-height:14px;font-weight:400;color:#111;letter-spacing:-0.000px;transform:scaleX(1.1213);">Fax No.:</span>
<span id="t25" class="t " style="left:1026.60px;top:373.15px;font-size:14px;line-height:14px;font-weight:400;color:#111;letter-spacing:0.000px;transform:scaleX(1.0939);">031 12 4545</span>
<span id="t26" class="t " style="left:732.00px;top:397.15px;font-size:14px;line-height:14px;font-weight:400;color:#111;letter-spacing:0.000px;transform:scaleX(1.1091);">VAT No.:</span>
<span id="t27" class="t " style="left:811.80px;top:397.15px;font-size:14px;line-height:14px;font-weight:400;color:#111;letter-spacing:0.000px;transform:scaleX(1.0819);">0000000</span>
<span id="t28" class="t " style="left:945.80px;top:397.15px;font-size:14px;line-height:14px;font-weight:400;color:#111;letter-spacing:0.000px;transform:scaleX(1.1423);">Tel No.:</span>
<span id="t29" class="t " style="left:1026.60px;top:397.15px;font-size:14px;line-height:14px;font-weight:400;color:#111;letter-spacing:0.000px;transform:scaleX(1.0995);">031 123 4567</span>
<span id="t30" class="t " style="left:366.00px;top:474.03px;font-size:14.5px;line-height:14.5px;font-weight:700;color:#000;letter-spacing:0.000px;transform:scaleX(1.1099);">Sales Person :</span>
<span id="t31" class="t " style="left:490.71px;top:473.75px;font-size:14px;line-height:14px;font-weight:400;color:#222;letter-spacing:0.000px;transform:scaleX(1.0917);">Kame Pillay</span>
<span id="t32" class="t " style="left:731.90px;top:430.63px;font-size:14.5px;line-height:14.5px;font-weight:700;color:#000;letter-spacing:0.000px;transform:scaleX(1.1250);">Document Ref.:</span>
<span id="t33" class="t " style="left:893.20px;top:430.63px;font-size:14.5px;line-height:14.5px;font-weight:700;color:#000;letter-spacing:0.082px;transform:scaleX(1.1600);">OR0000307</span>
<span id="t34" class="t " style="left:731.90px;top:451.53px;font-size:14.5px;line-height:14.5px;font-weight:700;color:#000;letter-spacing:0.000px;transform:scaleX(1.1379);">Date :</span>
<span id="t35" class="t " style="left:893.20px;top:451.95px;font-size:14px;line-height:14px;font-weight:400;color:#222;letter-spacing:0.103px;transform:scaleX(1.1600);">21/04/2020 00:00:00</span>
<span id="t36" class="t " style="left:731.90px;top:473.93px;font-size:14.5px;line-height:14.5px;font-weight:700;color:#000;letter-spacing:0.000px;transform:scaleX(1.1473);">Your Ref :</span>
<span id="t37" class="t " style="left:893.20px;top:474.35px;font-size:14px;line-height:14px;font-weight:400;color:#222;letter-spacing:0.000px;transform:scaleX(1.1128);">new quote1</span>
<span id="t38" class="t " style="left:367.70px;top:513.04px;font-size:12px;line-height:12px;font-weight:700;color:#000;letter-spacing:0.000px;transform:scaleX(1.1070);">Attention :</span>
<span id="t39" class="t sr" style="left:491.80px;top:511.00px;font-size:11.6px;line-height:11.6px;font-weight:400;color:#1f1f28;letter-spacing:0.725px;">Sam Twins</span>
<span id="t40" class="t " style="left:367.70px;top:534.64px;font-size:12px;line-height:12px;font-weight:700;color:#000;letter-spacing:0.000px;transform:scaleX(1.0817);">Billing</span>
<span id="t41" class="t " style="left:367.70px;top:548.64px;font-size:12px;line-height:12px;font-weight:700;color:#000;letter-spacing:-0.000px;transform:scaleX(1.0634);">Address :</span>
<span id="t42" class="t sr" style="left:491.80px;top:535.00px;font-size:11.6px;line-height:11.6px;font-weight:400;color:#1f1f28;letter-spacing:0.958px;">bill add</span>
<span id="t43" class="t " style="left:367.70px;top:628.54px;font-size:12px;line-height:12px;font-weight:700;color:#000;letter-spacing:0.000px;transform:scaleX(1.1116);">Customer :</span>
<span id="t44" class="t sr" style="left:491.80px;top:629.00px;font-size:11.6px;line-height:11.6px;font-weight:400;color:#1f1f28;letter-spacing:0.523px;">PIN0001 - Pink Shoes</span>
<span id="t45" class="t " style="left:367.70px;top:653.74px;font-size:12px;line-height:12px;font-weight:700;color:#000;letter-spacing:0.000px;transform:scaleX(1.1266);">Tel No. :</span>
<span id="t46" class="t sr" style="left:491.80px;top:651.00px;font-size:11.6px;line-height:11.6px;font-weight:400;color:#1f1f28;letter-spacing:0.975px;">031 456 7894</span>
<span id="t47" class="t " style="left:367.70px;top:669.84px;font-size:12px;line-height:12px;font-weight:700;color:#000;letter-spacing:0.000px;transform:scaleX(1.1092);">Fax No. :</span>
<span id="t48" class="t " style="left:367.70px;top:690.64px;font-size:12px;line-height:12px;font-weight:700;color:#000;letter-spacing:0.000px;transform:scaleX(1.1207);">VAT No. :</span>
<span id="t49" class="t sr" style="left:491.80px;top:693.00px;font-size:11.6px;line-height:11.6px;font-weight:400;color:#1f1f28;letter-spacing:1.119px;">1234</span>
<span id="t50" class="t " style="left:731.90px;top:513.84px;font-size:12px;line-height:12px;font-weight:700;color:#000;letter-spacing:0.000px;transform:scaleX(1.0581);">Ship Contact :</span>
<span id="t51" class="t sr" style="left:893.20px;top:511.00px;font-size:11.6px;line-height:11.6px;font-weight:400;color:#1f1f28;letter-spacing:0.713px;">Sam Twins</span>
<span id="t52" class="t " style="left:731.90px;top:534.74px;font-size:12px;line-height:12px;font-weight:700;color:#000;letter-spacing:-0.000px;transform:scaleX(1.0217);">Shipping</span>
<span id="t53" class="t " style="left:731.90px;top:548.24px;font-size:12px;line-height:12px;font-weight:700;color:#000;letter-spacing:0.000px;transform:scaleX(1.0598);">Address :</span>
<span id="t54" class="t sr" style="left:893.20px;top:535.00px;font-size:11.6px;line-height:11.6px;font-weight:400;color:#1f1f28;letter-spacing:0.517px;">PIN0001 - Pink Shoes</span>
<span id="t55" class="t sr" style="left:893.20px;top:553.00px;font-size:11.6px;line-height:11.6px;font-weight:400;color:#1f1f28;letter-spacing:0.809px;">House</span>
<span id="t56" class="t sr" style="left:893.20px;top:572.00px;font-size:11.6px;line-height:11.6px;font-weight:400;color:#1f1f28;letter-spacing:0.511px;">Road</span>
<span id="t57" class="t sr" style="left:893.20px;top:591.00px;font-size:11.6px;line-height:11.6px;font-weight:400;color:#1f1f28;letter-spacing:1.061px;">Town</span>
<span id="t58" class="t sr" style="left:893.20px;top:611.00px;font-size:11.6px;line-height:11.6px;font-weight:400;color:#1f1f28;letter-spacing:1.152px;">010203</span>
<span id="t59" class="t " style="left:731.90px;top:653.44px;font-size:12px;line-height:12px;font-weight:700;color:#000;letter-spacing:0.000px;transform:scaleX(1.1288);">Tel No. :</span>
<span id="t60" class="t sr" style="left:893.20px;top:651.00px;font-size:11.6px;line-height:11.6px;font-weight:400;color:#1f1f28;letter-spacing:0.939px;">031 456 7894</span>
<span id="t61" class="t " style="left:731.90px;top:674.24px;font-size:12px;line-height:12px;font-weight:700;color:#000;letter-spacing:0.000px;transform:scaleX(1.1092);">Fax No. :</span>
<span id="t62" class="t " style="left:731.90px;top:695.14px;font-size:12px;line-height:12px;font-weight:700;color:#000;letter-spacing:0.000px;transform:scaleX(1.1108);">Email :</span>
<span id="t63" class="t sr" style="left:893.20px;top:694.00px;font-size:11.6px;line-height:11.6px;font-weight:400;color:#1f1f28;letter-spacing:0.882px;">pillaykame1@gmail.com</span>
<span id="t64" class="t " style="left:369.00px;top:723.00px;font-size:13px;line-height:13px;font-weight:700;color:#000;letter-spacing:0.000px;transform:scaleX(1.0541);">Item Code</span>
<span id="t65" class="t " style="left:497.40px;top:723.00px;font-size:13px;line-height:13px;font-weight:700;color:#000;letter-spacing:-0.000px;transform:scaleX(1.0460);">Item Description</span>
<span id="t66" class="t " style="left:757.80px;top:723.00px;font-size:13px;line-height:13px;font-weight:700;color:#000;letter-spacing:0.000px;transform:scaleX(1.0020);">Quantity</span>
<span id="t67" class="t " style="left:842.90px;top:723.00px;font-size:13px;line-height:13px;font-weight:700;color:#000;letter-spacing:0.000px;transform:scaleX(1.0074);">Unit Price</span>
<span id="t68" class="t " style="left:926.90px;top:723.00px;font-size:13px;line-height:13px;font-weight:700;color:#000;letter-spacing:0.000px;transform:scaleX(0.9912);">Discount %</span>
<span id="t69" class="t " style="left:1036.90px;top:723.00px;font-size:13px;line-height:13px;font-weight:700;color:#000;letter-spacing:0.000px;transform:scaleX(1.0280);">Net Price</span>
<span id="t70" class="t " style="left:1171.60px;top:723.00px;font-size:13px;line-height:13px;font-weight:700;color:#000;letter-spacing:0.000px;transform:scaleX(1.0313);">Total</span>
<span id="t71" class="t sr" style="left:366.90px;top:747.00px;font-size:11.6px;line-height:11.6px;font-weight:400;color:#1f1f28;letter-spacing:0.110px;">SP500</span>
<span id="t72" class="t sr" style="left:495.70px;top:747.00px;font-size:11.6px;line-height:11.6px;font-weight:400;color:#1f1f28;letter-spacing:0.765px;">Sprint Colour Copier</span>
<span id="t73" class="t sr" style="left:783.50px;top:747.00px;font-size:11.6px;line-height:11.6px;font-weight:400;color:#1f1f28;letter-spacing:0.861px;">1.00</span>
<span id="t74" class="t sr" style="left:834.50px;top:747.00px;font-size:11.6px;line-height:11.6px;font-weight:400;color:#1f1f28;letter-spacing:0.947px;">210,000.00</span>
<span id="t75" class="t sr" style="left:969.50px;top:747.00px;font-size:11.6px;line-height:11.6px;font-weight:400;color:#1f1f28;letter-spacing:1.094px;">0.00</span>
<span id="t76" class="t sr" style="left:1025.40px;top:747.00px;font-size:11.6px;line-height:11.6px;font-weight:400;color:#1f1f28;letter-spacing:1.003px;">210,000.00</span>
<span id="t77" class="t sr" style="left:1134.70px;top:747.00px;font-size:11.6px;line-height:11.6px;font-weight:400;color:#1f1f28;letter-spacing:0.980px;">241,500.00</span>
<span id="t78" class="t sr" style="left:366.90px;top:769.00px;font-size:11.6px;line-height:11.6px;font-weight:400;color:#1f1f28;letter-spacing:-0.366px;">50PGFT</span>
<span id="t79" class="t sr" style="left:495.70px;top:769.00px;font-size:11.6px;line-height:11.6px;font-weight:400;color:#1f1f28;letter-spacing:0.732px;">50 Page Feeder Tray</span>
<span id="t80" class="t sr" style="left:783.50px;top:769.00px;font-size:11.6px;line-height:11.6px;font-weight:400;color:#1f1f28;letter-spacing:0.861px;">1.00</span>
<span id="t81" class="t sr" style="left:849.30px;top:769.00px;font-size:11.6px;line-height:11.6px;font-weight:400;color:#1f1f28;letter-spacing:0.945px;">3,500.00</span>
<span id="t82" class="t sr" style="left:969.50px;top:769.00px;font-size:11.6px;line-height:11.6px;font-weight:400;color:#1f1f28;letter-spacing:1.094px;">0.00</span>
<span id="t83" class="t sr" style="left:1040.30px;top:769.00px;font-size:11.6px;line-height:11.6px;font-weight:400;color:#1f1f28;letter-spacing:1.003px;">3,500.00</span>
<span id="t84" class="t sr" style="left:1149.80px;top:769.00px;font-size:11.6px;line-height:11.6px;font-weight:400;color:#1f1f28;letter-spacing:0.931px;">4,025.00</span>
<span id="t85" class="t " style="left:448.78px;top:287.93px;font-size:23px;line-height:23px;font-weight:400;color:#d4d4d4;letter-spacing:0.000px;transform:scaleX(1.1180);">Company Logo</span>
</div>
</body></html>
